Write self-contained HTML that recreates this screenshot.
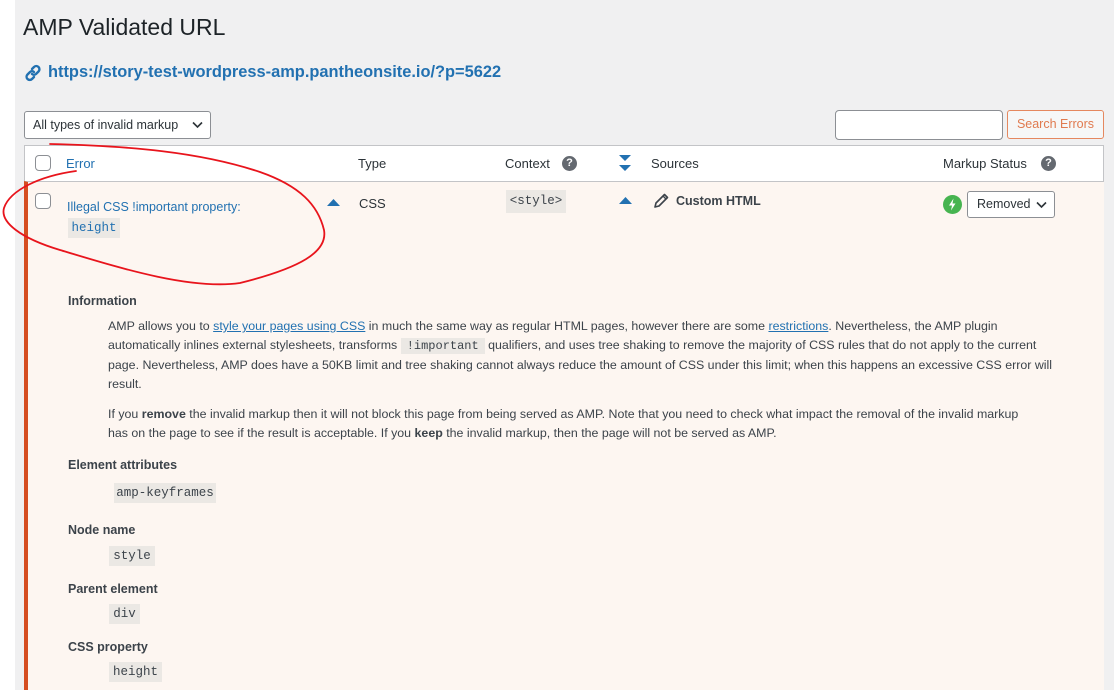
<!DOCTYPE html>
<html><head><meta charset="utf-8"><style>
*{box-sizing:border-box;margin:0;padding:0}
html,body{width:1114px;height:690px;overflow:hidden}
body{background:#f0f0f1;font-family:"Liberation Sans",sans-serif;color:#3c434a;position:relative;font-size:13px}
.a{position:absolute;white-space:nowrap}
.code{position:absolute;background:#ebe8e4;font-family:"Liberation Mono",monospace;font-size:12.5px;color:#3c434a;text-align:center;line-height:20px}
.cb{position:absolute;width:16px;height:16px;border:1px solid #8c8f94;border-radius:4px;background:#fff}
.p{position:absolute;left:108px;font-size:12.4px;line-height:19px;white-space:nowrap;color:#3c434a}
.p a{color:#2271b1;text-decoration:underline}
.h{position:absolute;left:68px;font-weight:bold;font-size:12.5px;color:#3c434a}
.q{position:absolute;width:15px;height:15px;border-radius:50%;background:#646970;color:#fff;font-size:11px;font-weight:bold;text-align:center;line-height:15px}
</style></head><body>
<div style="position:absolute;left:0;top:0;width:15px;height:690px;background:#fff"></div>
<div class="a" style="left:23px;top:14px;font-size:23px;color:#1d2327">AMP Validated URL</div>
<svg class="a" style="left:24px;top:64px" width="18" height="18" viewBox="0 0 18 18"><g fill="none" stroke="#2271b1" stroke-width="2.4" stroke-linecap="round"><path d="M8 5l2-2a3 3 0 0 1 4.5 4.5l-2.5 2.5a3 3 0 0 1-4 0"/><path d="M10 13l-2 2a3 3 0 0 1-4.5-4.5l2.5-2.5a3 3 0 0 1 4 0"/></g></svg>
<div class="a" style="left:48px;top:63px;font-size:16.4px;font-weight:bold;color:#2271b1">https://story-test-wordpress-amp.pantheonsite.io/?p=5622</div>
<div class="a" style="left:24px;top:111px;width:187px;height:28px;border:1px solid #8c8f94;border-radius:3px;background:#fff;font-size:12.5px;line-height:26px;padding-left:8px;color:#2c3338">All types of invalid markup<svg style="position:absolute;right:7px;top:9px" width="11" height="8"><path d="M1 1.5l4.5 4.5 4.5-4.5" fill="none" stroke="#2c3338" stroke-width="1.6"/></svg></div>
<div class="a" style="left:835px;top:110px;width:168px;height:30px;border:1px solid #8c8f94;border-radius:4px;background:#fff"></div>
<div class="a" style="left:1007px;top:110px;width:97px;height:29px;border:1px solid #e5885f;border-radius:3px;background:#f6f7f7;color:#e07a4f;font-size:12.5px;line-height:27px;text-align:center">Search Errors</div>
<div class="a" style="left:24px;top:145px;width:1080px;height:545px;background:#fff;border:1px solid #c3c4c7;border-bottom:none"></div>
<div class="a" style="left:24px;top:181px;width:1080px;height:509px;background:#fdf6f1;border-top:1px solid #c3c4c7;border-left:4px solid #d54e21"></div>
<div class="cb" style="left:35px;top:155px"></div>
<div class="a" style="left:66px;top:156px;color:#2271b1;font-size:13px">Error</div>
<div class="a" style="left:358px;top:156px;color:#2c3338">Type</div>
<div class="a" style="left:505px;top:156px;color:#2c3338">Context</div>
<div class="q" style="left:562px;top:156px">?</div>
<svg class="a" style="left:618px;top:154px" width="14" height="18"><path d="M1 1h12l-6 6z M1 11h12l-6 6z" fill="#2271b1"/></svg>
<div class="a" style="left:651px;top:156px;color:#2c3338">Sources</div>
<div class="a" style="left:943px;top:156px;color:#2c3338">Markup Status</div>
<div class="q" style="left:1041px;top:156px">?</div>
<div class="cb" style="left:35px;top:193px"></div>
<div class="a" style="left:67px;top:200px;color:#2271b1;font-size:12.5px">Illegal CSS !important property:</div>
<div class="code" style="left:68px;top:218px;width:52px;color:#2271b1">height</div>
<svg class="a" style="left:327px;top:199px" width="13" height="7"><path d="M0 7h13L6.5 0z" fill="#2271b1"/></svg>
<div class="a" style="left:359px;top:196px;color:#2c3338">CSS</div>
<div class="code" style="left:506px;top:190px;width:60px;height:23px;line-height:23px">&lt;style&gt;</div>
<svg class="a" style="left:619px;top:197px" width="13" height="7"><path d="M0 7h13L6.5 0z" fill="#2271b1"/></svg>
<svg class="a" style="left:654px;top:193px" width="15" height="15" viewBox="0 0 15 15"><path d="M10.5 1.5l3 3-8.5 8.5-4 1 1-4z" fill="none" stroke="#3c434a" stroke-width="1.6" stroke-linejoin="round"/><path d="M9 3l3 3" stroke="#3c434a" stroke-width="1.4"/></svg>
<div class="a" style="left:676px;top:194px;font-weight:bold;font-size:12.5px;color:#3c434a">Custom HTML</div>
<svg class="a" style="left:943px;top:195px" width="19" height="19"><circle cx="9.5" cy="9.5" r="9.5" fill="#46b450"/><path d="M10.5 3.5L6 10.5h3l-1 5 4.5-7h-3z" fill="#fff"/></svg>
<div class="a" style="left:967px;top:191px;width:88px;height:27px;border:1px solid #8c8f94;border-radius:3px;background:#fff;font-size:12.5px;line-height:25px;padding-left:9px;color:#2c3338">Removed<svg style="position:absolute;right:7px;top:9px" width="11" height="8"><path d="M1 1.5l4.5 4.5 4.5-4.5" fill="none" stroke="#2c3338" stroke-width="1.6"/></svg></div>
<div class="h" style="top:294px">Information</div>
<div class="p" style="top:317px">AMP allows you to <a>style your pages using CSS</a> in much the same way as regular HTML pages, however there are some <a>restrictions</a>. Nevertheless, the AMP plugin<br>automatically inlines external stylesheets, transforms <span style="background:#ebe8e4;font-family:'Liberation Mono',monospace;font-size:12px;padding:1px 6px">!important</span> qualifiers, and uses tree shaking to remove the majority of CSS rules that do not apply to the current<br>page. Nevertheless, AMP does have a 50KB limit and tree shaking cannot always reduce the amount of CSS under this limit; when this happens an excessive CSS error will<br>result.</div>
<div class="p" style="top:405px">If you <b>remove</b> the invalid markup then it will not block this page from being served as AMP. Note that you need to check what impact the removal of the invalid markup<br>has on the page to see if the result is acceptable. If you <b>keep</b> the invalid markup, then the page will not be served as AMP.</div>
<div class="h" style="top:458px">Element attributes</div>
<div class="code" style="left:114px;top:483px;width:102px">amp-keyframes</div>
<div class="h" style="top:523px">Node name</div>
<div class="code" style="left:109px;top:546px;width:46px">style</div>
<div class="h" style="top:582px">Parent element</div>
<div class="code" style="left:109px;top:604px;width:31px">div</div>
<div class="h" style="top:640px">CSS property</div>
<div class="code" style="left:109px;top:662px;width:53px">height</div>
<svg class="a" style="left:0;top:0" width="1114" height="690"><path d="M50 144 C130 146 200 152 260 172 C300 186 318 205 324 230 C328 252 300 268 240 283 C190 290 120 268 60 250 C20 238 0 222 4 208 C10 190 40 176 76 171" fill="none" stroke="#e8141c" stroke-width="1.8" stroke-linecap="round"/></svg>
</body></html>
